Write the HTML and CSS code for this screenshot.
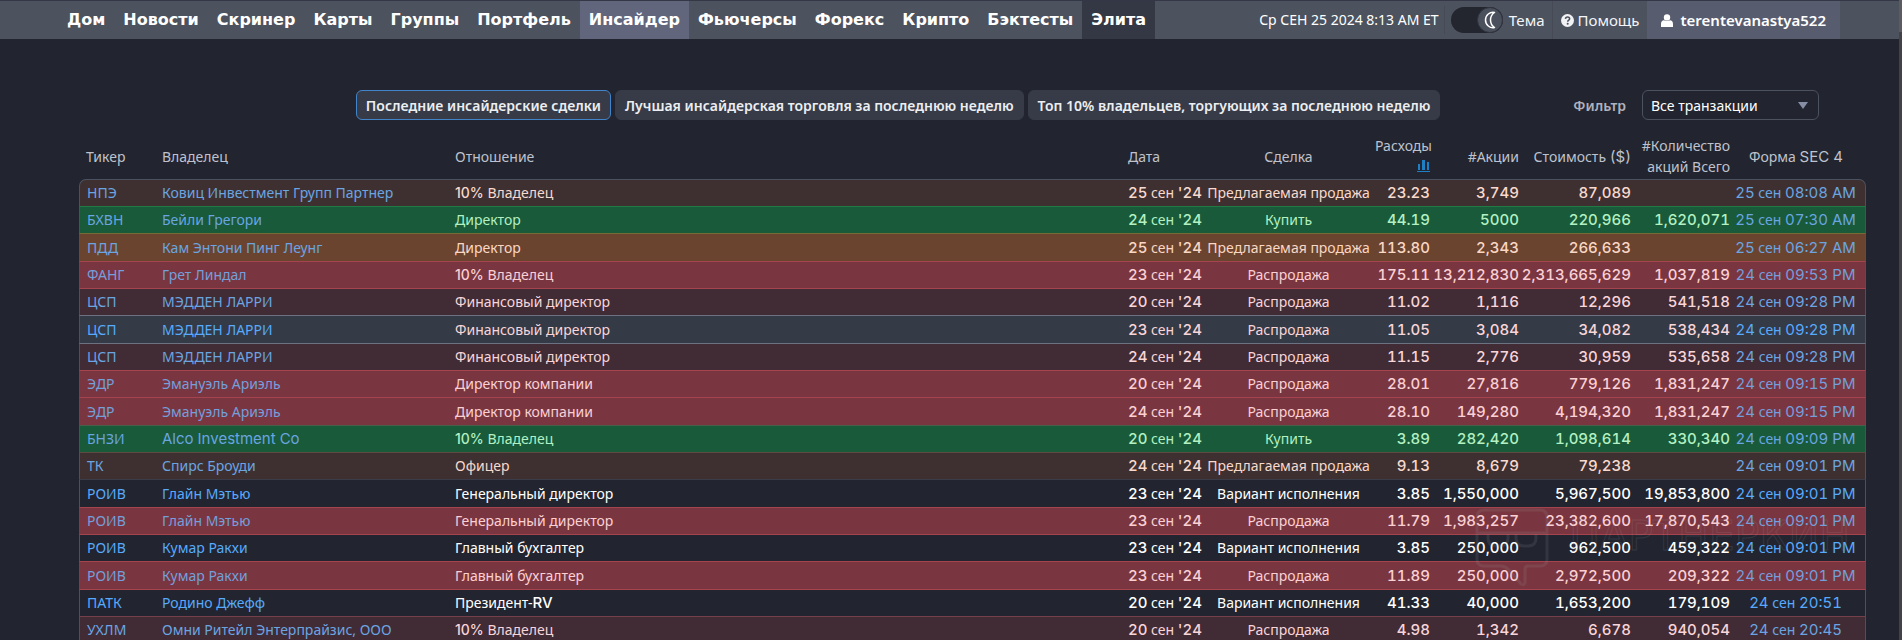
FILE: index.html
```html
<!DOCTYPE html>
<html lang="ru">

<head>
  <meta charset="UTF-8">
  <meta name="viewport" content="width=device-width, initial-scale=1.0">
  <title>Инсайдер</title>
  <link rel="stylesheet" href="styles.css">
</head>

<body>
  <header class="navbar">
    <nav class="menu">
      <a href="#">Дом</a>
      <a href="#">Новости</a>
      <a href="#">Скринер</a>
      <a href="#">Карты</a>
      <a href="#">Группы</a>
      <a href="#">Портфель</a>
      <a href="#" class="active">Инсайдер</a>
      <a href="#">Фьючерсы</a>
      <a href="#">Форекс</a>
      <a href="#">Крипто</a>
      <a href="#">Бэктесты</a>
      <a href="#" class="elite">Элита</a>
    </nav>
    <div class="tools">
      <span class="clock">Ср СЕН 25 2024 8:13 AM ET</span>
      <button type="button" class="theme">
        <span class="switch">
          <span class="knob">
            <svg width="12" height="18" viewBox="0 0 12 18"><path d="M10.500 1.500C6 0.500 1.500 4 1.500 9s4.500 8.500 9 7.500C7.500 14.500 6.500 12 6.500 9s1-5.500 4-7.500z" fill="none" stroke="#fff" stroke-width="1.500" stroke-linejoin="round"/></svg>
          </span>
        </span>
        Тема
      </button>
      <a href="#" class="help">
        <svg width="13" height="13" viewBox="0 0 14 14"><circle cx="7" cy="7" r="7" fill="#f1f2f5"/><path d="M4.800 5.300C4.900 3.700 6 3.200 7.100 3.200c1.200 0 2.200 0.700 2.200 1.900C9.300 6.700 7.300 6.700 7.200 8.400" fill="none" stroke="#4c525e" stroke-width="1.700"/><circle cx="7.200" cy="10.500" r="1.100" fill="#4c525e"/></svg>
        Помощь
      </a>
      <a href="#" class="user">
        <svg width="12" height="13" viewBox="0 0 12 13"><circle cx="6" cy="3.400" r="3.200" fill="#fff"/><path d="M0 13v-3C0 7.500 1.300 6.300 3 6.300c1 0.800 5 0.800 6 0 1.700 0 3 1.200 3 3.700v3z" fill="#fff"/></svg>
        terentevanastya522
      </a>
    </div>
  </header>

  <main>
    <div class="toolbar">
      <div class="tabs">
        <button type="button" class="tab selected">Последние инсайдерские сделки</button>
        <button type="button" class="tab">Лучшая инсайдерская торговля за последнюю неделю</button>
        <button type="button" class="tab">Топ 10% владельцев, торгующих за последнюю неделю</button>
      </div>
      <div class="filter">
        <label for="transactions">Фильтр</label>
        <div class="select-box">
          <select id="transactions">
            <option>Все транзакции</option>
            <option>Купить</option>
            <option>Распродажа</option>
          </select>
        </div>
      </div>
    </div>

    <table class="insider">
      <colgroup>
        <col class="c-ticker">
        <col class="c-owner">
        <col>
        <col class="c-date">
        <col class="c-deal">
        <col class="c-cost">
        <col class="c-shares">
        <col class="c-value">
        <col class="c-total">
        <col class="c-form">
      </colgroup>
      <thead>
        <tr>
          <th>Тикер</th>
          <th>Владелец</th>
          <th>Отношение</th>
          <th>Дата</th>
          <th>Сделка</th>
          <th>Расходы<br>
            <svg width="13" height="13" viewBox="0 0 13 13"><path d="M0 12h13v1H0zM1 5h2v6H1zM5 1h3v10H5zM10 3h2v8h-2z" fill="#1f7fc4"/></svg>
          </th>
          <th>#Акции</th>
          <th>Стоимость <span class="num">($)</span></th>
          <th>#Количество акций Всего</th>
          <th>Форма <span class="num">SEC 4</span></th>
        </tr>
      </thead>
      <tbody>
        <tr class="proposed">
          <td><a href="#">НПЭ</a></td><td><a href="#">Ковиц Инвестмент Групп Партнер</a></td><td><span class="pct">10%</span> Владелец</td><td><span class="num">25</span> сен <span class="num">'24</span></td><td>Предлагаемая продажа</td><td>23.23</td><td>3,749</td><td>87,089</td><td></td><td><a href="#"><span class="num">25</span> сен <span class="num">08:08 AM</span></a></td>
        </tr>
        <tr class="buy">
          <td><a href="#">БХВН</a></td><td><a href="#">Бейли Грегори</a></td><td>Директор</td><td><span class="num">24</span> сен <span class="num">'24</span></td><td>Купить</td><td>44.19</td><td>5000</td><td>220,966</td><td>1,620,071</td><td><a href="#"><span class="num">25</span> сен <span class="num">07:30 AM</span></a></td>
        </tr>
        <tr class="proposed-big">
          <td><a href="#">ПДД</a></td><td><a href="#">Кам Энтони Пинг Леунг</a></td><td>Директор</td><td><span class="num">25</span> сен <span class="num">'24</span></td><td>Предлагаемая продажа</td><td>113.80</td><td>2,343</td><td>266,633</td><td></td><td><a href="#"><span class="num">25</span> сен <span class="num">06:27 AM</span></a></td>
        </tr>
        <tr class="sale-big">
          <td><a href="#">ФАНГ</a></td><td><a href="#">Грет Линдал</a></td><td><span class="pct">10%</span> Владелец</td><td><span class="num">23</span> сен <span class="num">'24</span></td><td>Распродажа</td><td>175.11</td><td>13,212,830</td><td>2,313,665,629</td><td>1,037,819</td><td><a href="#"><span class="num">24</span> сен <span class="num">09:53 PM</span></a></td>
        </tr>
        <tr class="sale">
          <td><a href="#">ЦСП</a></td><td><a href="#">МЭДДЕН ЛАРРИ</a></td><td>Финансовый директор</td><td><span class="num">20</span> сен <span class="num">'24</span></td><td>Распродажа</td><td>11.02</td><td>1,116</td><td>12,296</td><td>541,518</td><td><a href="#"><span class="num">24</span> сен <span class="num">09:28 PM</span></a></td>
        </tr>
        <tr class="sale current">
          <td><a href="#">ЦСП</a></td><td><a href="#">МЭДДЕН ЛАРРИ</a></td><td>Финансовый директор</td><td><span class="num">23</span> сен <span class="num">'24</span></td><td>Распродажа</td><td>11.05</td><td>3,084</td><td>34,082</td><td>538,434</td><td><a href="#"><span class="num">24</span> сен <span class="num">09:28 PM</span></a></td>
        </tr>
        <tr class="sale">
          <td><a href="#">ЦСП</a></td><td><a href="#">МЭДДЕН ЛАРРИ</a></td><td>Финансовый директор</td><td><span class="num">24</span> сен <span class="num">'24</span></td><td>Распродажа</td><td>11.15</td><td>2,776</td><td>30,959</td><td>535,658</td><td><a href="#"><span class="num">24</span> сен <span class="num">09:28 PM</span></a></td>
        </tr>
        <tr class="sale-big">
          <td><a href="#">ЭДР</a></td><td><a href="#">Эмануэль Ариэль</a></td><td>Директор компании</td><td><span class="num">20</span> сен <span class="num">'24</span></td><td>Распродажа</td><td>28.01</td><td>27,816</td><td>779,126</td><td>1,831,247</td><td><a href="#"><span class="num">24</span> сен <span class="num">09:15 PM</span></a></td>
        </tr>
        <tr class="sale-big">
          <td><a href="#">ЭДР</a></td><td><a href="#">Эмануэль Ариэль</a></td><td>Директор компании</td><td><span class="num">24</span> сен <span class="num">'24</span></td><td>Распродажа</td><td>28.10</td><td>149,280</td><td>4,194,320</td><td>1,831,247</td><td><a href="#"><span class="num">24</span> сен <span class="num">09:15 PM</span></a></td>
        </tr>
        <tr class="buy">
          <td><a href="#">БНЗИ</a></td><td><a href="#" class="num">Alco Investment Co</a></td><td><span class="pct">10%</span> Владелец</td><td><span class="num">20</span> сен <span class="num">'24</span></td><td>Купить</td><td>3.89</td><td>282,420</td><td>1,098,614</td><td>330,340</td><td><a href="#"><span class="num">24</span> сен <span class="num">09:09 PM</span></a></td>
        </tr>
        <tr class="proposed">
          <td><a href="#">ТК</a></td><td><a href="#">Спирс Броуди</a></td><td>Офицер</td><td><span class="num">24</span> сен <span class="num">'24</span></td><td>Предлагаемая продажа</td><td>9.13</td><td>8,679</td><td>79,238</td><td></td><td><a href="#"><span class="num">24</span> сен <span class="num">09:01 PM</span></a></td>
        </tr>
        <tr>
          <td><a href="#">РОИВ</a></td><td><a href="#">Глайн Мэтью</a></td><td>Генеральный директор</td><td><span class="num">23</span> сен <span class="num">'24</span></td><td>Вариант исполнения</td><td>3.85</td><td>1,550,000</td><td>5,967,500</td><td>19,853,800</td><td><a href="#"><span class="num">24</span> сен <span class="num">09:01 PM</span></a></td>
        </tr>
        <tr class="sale-big">
          <td><a href="#">РОИВ</a></td><td><a href="#">Глайн Мэтью</a></td><td>Генеральный директор</td><td><span class="num">23</span> сен <span class="num">'24</span></td><td>Распродажа</td><td>11.79</td><td>1,983,257</td><td>23,382,600</td><td>17,870,543</td><td><a href="#"><span class="num">24</span> сен <span class="num">09:01 PM</span></a></td>
        </tr>
        <tr>
          <td><a href="#">РОИВ</a></td><td><a href="#">Кумар Ракхи</a></td><td>Главный бухгалтер</td><td><span class="num">23</span> сен <span class="num">'24</span></td><td>Вариант исполнения</td><td>3.85</td><td>250,000</td><td>962,500</td><td>459,322</td><td><a href="#"><span class="num">24</span> сен <span class="num">09:01 PM</span></a></td>
        </tr>
        <tr class="sale-big">
          <td><a href="#">РОИВ</a></td><td><a href="#">Кумар Ракхи</a></td><td>Главный бухгалтер</td><td><span class="num">23</span> сен <span class="num">'24</span></td><td>Распродажа</td><td>11.89</td><td>250,000</td><td>2,972,500</td><td>209,322</td><td><a href="#"><span class="num">24</span> сен <span class="num">09:01 PM</span></a></td>
        </tr>
        <tr>
          <td><a href="#">ПАТК</a></td><td><a href="#">Родино Джефф</a></td><td>Президент-<span class="num">RV</span></td><td><span class="num">20</span> сен <span class="num">'24</span></td><td>Вариант исполнения</td><td>41.33</td><td>40,000</td><td>1,653,200</td><td>179,109</td><td><a href="#"><span class="num">24</span> сен <span class="num">20:51</span></a></td>
        </tr>
        <tr class="sale">
          <td><a href="#">УХЛМ</a></td><td><a href="#">Омни Ритейл Энтерпрайзис, ООО</a></td><td><span class="pct">10%</span> Владелец</td><td><span class="num">20</span> сен <span class="num">'24</span></td><td>Распродажа</td><td>4.98</td><td>1,342</td><td>6,678</td><td>940,054</td><td><a href="#"><span class="num">24</span> сен <span class="num">20:45</span></a></td>
        </tr>
      </tbody>
    </table>
  </main>

  <div class="watermark">
    <svg width="74" height="80" viewBox="0 0 74 80"><path d="M9 2h56q7 0 7 7v42q0 7-7 7H53q-3 0-3 4v12q0 4-4 2L34 62q-4-4-8-4H9q-7 0-7-7V9q0-7 7-7zM2 25h70M13 26v4q0 8 8 8h4q8 0 8-8v-4M41 26v4q0 8 8 8h4q8 0 8-8v-4"/></svg>
    <span>ПАРТНЕРКИН</span>
  </div>
  <div class="scroll-track"></div>
</body>

</html>
```

FILE: styles.css
```css
* {
  box-sizing: border-box;
}
body {
  margin: 0;
  min-height: 100vh;
  overflow: hidden;
  position: relative;
  background-color: #22252f;
  color: #fff;
  font-family: "Noto Sans", "Open Sans", sans-serif;
  font-size: 14px;
}
a {
  text-decoration: none;
}
button, select {
  font-family: inherit;
}
.num {
  font-family: Inter, sans-serif;
  font-size: 15px;
  font-variant-numeric: tabular-nums;
}
.pct {
  font-family: Inter, sans-serif;
  font-weight: 500;
}

/* top bar */
.navbar {
  display: flex;
  justify-content: space-between;
  height: 39px;
  padding: 0 62px 0 58px;
  border-top: 1px solid #343846;
  background-color: #4c525e;
}
.menu, .tools {
  display: flex;
}
.menu a {
  padding: 0 9px;
  color: #fff;
  font-family: "DejaVu Sans", "Noto Sans", sans-serif;
  font-size: 16px;
  font-weight: bold;
  line-height: 38px;
}
.menu .active {
  background-color: #62667c;
}
.menu .elite {
  background-color: #343744;
}
.tools {
  align-items: center;
}
.clock {
  padding-right: 5px;
  border-right: 1px solid #454a56;
  line-height: 28px;
}
.theme, .help, .user {
  display: flex;
  align-items: center;
  height: 38px;
  color: #f4f5f8;
  font-size: 15px;
}
.theme {
  gap: 6px;
  padding: 0 7px 0 6px;
  border: 0;
  border-right: 1px solid #454a56;
  background: none;
}
.switch {
  display: flex;
  justify-content: flex-end;
  width: 52px;
  height: 26px;
  border-radius: 13px;
  background-color: #23252f;
}
.knob {
  display: flex;
  align-items: center;
  justify-content: center;
  width: 26px;
  height: 26px;
  border: 1px solid #31343f;
  border-radius: 13px;
  background-color: #4b505d;
}
.help {
  gap: 4px;
  padding: 0 8px;
}
.user {
  gap: 7px;
  padding: 0 14px;
  background-color: #585c6f;
  color: #fff;
  font-weight: 600;
}

/* tabs and filter */
.toolbar {
  display: flex;
  align-items: center;
  justify-content: flex-end;
  gap: 133px;
  padding: 51px 83px 0 79px;
}
.tabs {
  display: flex;
  gap: 4px;
}
.tab {
  height: 30px;
  padding: 0 9px;
  border: 1px solid #363b47;
  border-radius: 6px;
  background-color: #363b47;
  color: #eceef2;
  font-size: 14px;
  font-weight: 600;
  white-space: nowrap;
}
.tab.selected {
  border-color: #4184c9;
}
.filter {
  display: flex;
  align-items: center;
  gap: 16px;
}
.filter label {
  color: #afb2be;
  font-weight: 600;
}
.select-box {
  position: relative;
}
.select-box::after {
  content: "";
  position: absolute;
  top: 12px;
  right: 11px;
  border: 5px solid transparent;
  border-top: 7px solid #868ea5;
  border-bottom: 0;
  pointer-events: none;
}
.filter select {
  width: 177px;
  height: 30px;
  padding: 0 8px;
  border: 1px solid #4c5160;
  border-radius: 6px;
  appearance: none;
  background-color: #22252f;
  color: #fff;
  font-size: 14px;
}

/* insider table */
.insider {
  width: calc(100% - 115px);
  margin: 13px 36px 0 79px;
  table-layout: fixed;
  border-collapse: separate;
  border-spacing: 0;
}
.c-ticker { width: 82px; }
.c-owner { width: 293px; }
.c-date { width: 76px; }
.c-deal { width: 171px; }
.c-cost { width: 57px; }
.c-shares { width: 89px; }
.c-value { width: 112px; }
.c-total { width: 99px; }
.c-form { width: 135px; }
.insider th, .insider td {
  padding: 0 1px;
  text-align: left;
  white-space: nowrap;
}
.insider th {
  height: 46px;
  color: #bfc2cd;
  font-weight: normal;
  line-height: 21px;
}
.insider th:nth-child(9) {
  white-space: normal;
}
.insider td {
  height: 27px;
  border-top: 1px solid #3a3d49;
  line-height: 20px;
}
.insider tbody tr:nth-child(3n) td {
  height: 28px;
}
.insider th:first-child, .insider td:first-child {
  padding-left: 7px;
}
.insider td:first-child {
  border-left: 1px solid #4c5160;
}
.insider td:last-child {
  border-right: 1px solid #4c5160;
}
.insider tbody tr:first-child td {
  border-top-color: #4c5160;
}
.insider tbody tr:first-child td:first-child {
  border-top-left-radius: 7px;
}
.insider tbody tr:first-child td:last-child {
  border-top-right-radius: 7px;
}
.insider th:nth-child(5), .insider td:nth-child(5),
.insider th:nth-child(10), .insider td:nth-child(10) {
  text-align: center;
}
.insider th:nth-child(10), .insider td:nth-child(10) {
  padding-right: 6px;
}
.insider th:nth-child(n+6):nth-child(-n+9),
.insider td:nth-child(n+6):nth-child(-n+9) {
  text-align: right;
}
.insider td:nth-child(n+6):nth-child(-n+9) {
  font-family: Inter, sans-serif;
  font-size: 15px;
  font-variant-numeric: tabular-nums;
  font-weight: 500;
}
.insider td .num {
  font-weight: 500;
}
.insider td a, .insider td a .num, .insider td a.num {
  color: #57aafd;
  font-weight: 400;
}

/* row colours by kind of deal */
.insider .proposed td {
  background-color: #3e3030;
  border-top-color: #5c4a40;
  color: #f8d9cd;
}
.insider .proposed-big td {
  background-color: #6b4430;
  border-top-color: #766a35;
  color: #fad7c4;
}
.insider .buy td {
  background-color: #185a39;
  border-top-color: #1f7a44;
  color: #b3f0c2;
}
.insider .sale td {
  background-color: #412b35;
  border-top-color: #73404c;
  color: #f8d5d8;
}
.insider .sale-big td, .insider .sale-big + tr td {
  border-top-color: #a5434e;
}
.insider .sale-big td {
  background-color: #7a3640;
  color: #fbd0d4;
}
.insider .sale-big + .buy td {
  border-top-color: #48604a;
}
.insider .current td {
  background-color: #343a46;
}
.insider .current td, .insider .current + tr td {
  border-top-color: #6c7282;
}
.insider tr[class] td a, .insider tr[class] td a .num {
  color: #6aa5e2;
}
.insider tr.current td a, .insider tr.current td a .num {
  color: #57aafd;
}
.insider tr.sale-big td a, .insider tr.sale-big td a .num {
  color: #739fdb;
}

/* mark lying over the table */
.watermark {
  position: absolute;
  right: 52px;
  top: 508px;
  display: flex;
  gap: 20px;
  opacity: 0.14;
  pointer-events: none;
}
.watermark path {
  fill: none;
  stroke: #9aa0a8;
  stroke-width: 3;
}
.watermark span {
  color: transparent;
  font-family: "DejaVu Sans", sans-serif;
  font-size: 41px;
  line-height: 56px;
  -webkit-text-stroke: 1px #9aa0a8;
}
.scroll-track {
  position: absolute;
  top: 0;
  right: 0;
  bottom: 0;
  width: 3px;
  border-top: 32px solid #5c5c60;
  background-color: #434347;
}
```
